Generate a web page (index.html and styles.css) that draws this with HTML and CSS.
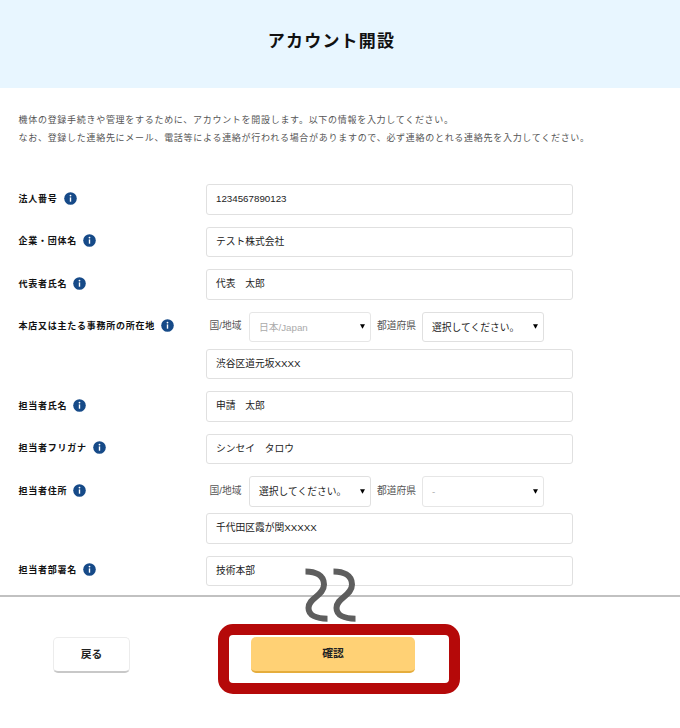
FILE: index.html
```html
<!DOCTYPE html>
<html lang="ja">
<head>
<meta charset="utf-8">
<title>アカウント開設</title>
<link rel="stylesheet" href="styles.css">
</head>
<body>
<svg class="defs" width="0" height="0">
  <symbol id="info" viewBox="0 0 13 13">
    <circle cx="6.5" cy="6.5" r="6.3" fill="#164a88"/>
    <circle cx="6.5" cy="3.6" r="0.9" fill="#fff"/>
    <path d="M6.5 5.4V9.7" stroke="#fff" stroke-width="1.4"/>
  </symbol>
  <symbol id="caret" viewBox="0 0 5 5">
    <path d="M0 0.2H5L2.5 4.8Z" fill="#000"/>
  </symbol>
</svg>
<header class="header"><h1 class="title">アカウント開設</h1></header>
<main>
  <div class="intro">
    <p>機体の登録手続きや管理をするために、アカウントを開設します。以下の情報を入力してください。</p>
    <p>なお、登録した連絡先にメール、電話等による連絡が行われる場合がありますので、必ず連絡のとれる連絡先を入力してください。</p>
  </div>
  <div class="form">
    <div class="row">
      <div class="label">法人番号<svg class="info"><use href="#info"/></svg></div>
      <div class="fields"><div class="input">1234567890123</div></div>
    </div>
    <div class="row">
      <div class="label">企業・団体名<svg class="info"><use href="#info"/></svg></div>
      <div class="fields"><div class="input">テスト株式会社</div></div>
    </div>
    <div class="row">
      <div class="label">代表者氏名<svg class="info"><use href="#info"/></svg></div>
      <div class="fields"><div class="input">代表　太郎</div></div>
    </div>
    <div class="row">
      <div class="label">本店又は主たる事務所の所在地<svg class="info"><use href="#info"/></svg></div>
      <div class="fields">
        <div class="selects">
          <span class="caption">国/地域</span>
          <div class="select disabled">日本/Japan<svg class="caret"><use href="#caret"/></svg></div>
          <span class="caption pref">都道府県</span>
          <div class="select">選択してください。<svg class="caret"><use href="#caret"/></svg></div>
        </div>
        <div class="input">渋谷区道元坂XXXX</div>
      </div>
    </div>
    <div class="row">
      <div class="label">担当者氏名<svg class="info"><use href="#info"/></svg></div>
      <div class="fields"><div class="input">申請　太郎</div></div>
    </div>
    <div class="row">
      <div class="label">担当者フリガナ<svg class="info"><use href="#info"/></svg></div>
      <div class="fields"><div class="input">シンセイ　タロウ</div></div>
    </div>
    <div class="row">
      <div class="label">担当者住所<svg class="info"><use href="#info"/></svg></div>
      <div class="fields">
        <div class="selects">
          <span class="caption">国/地域</span>
          <div class="select">選択してください。<svg class="caret"><use href="#caret"/></svg></div>
          <span class="caption pref">都道府県</span>
          <div class="select disabled">-<svg class="caret"><use href="#caret"/></svg></div>
        </div>
        <div class="input">千代田区霞が関XXXXX</div>
      </div>
    </div>
    <div class="row">
      <div class="label">担当者部署名<svg class="info"><use href="#info"/></svg></div>
      <div class="fields"><div class="input">技術本部</div></div>
    </div>
  </div>
</main>
<footer class="footer">
  <svg class="break" viewBox="0 0 52 54" fill="none" stroke="#5e5e5e" stroke-width="6">
    <path id="wave" d="M.5 3.5C10 3.5 19 7 19 16.5C19 28 3.5 29.5 3.5 40C3.5 47 11 50.7 22.5 50.7"/>
    <use href="#wave" x="28"/>
  </svg>
  <div class="button back">戻る</div>
  <div class="highlight"><div class="button confirm">確認</div></div>
</footer>
</body>
</html>
```
FILE: styles.css
```css
* { box-sizing: border-box; }

body {
  margin: 0;
  background: #fff;
  color: #222;
  font-family: "Liberation Sans", "Noto Sans CJK JP", sans-serif;
  font-size: 9.75px;
}

.defs { display: block; }

.header {
  height: 87.5px;
  background: #e8f6ff;
  display: flex;
  justify-content: center;
  padding: 27px 17px 0 0;
}

.title {
  margin: 0;
  font-size: 17px;
  line-height: 30px;
  letter-spacing: 1.2px;
  font-weight: 700;
  color: #111;
}

.intro {
  padding: 23px 0 0 18.5px;
  height: 96.5px;
  color: #555;
  font-size: 9px;
  letter-spacing: 0.71px;
  white-space: nowrap;
}

.intro p { margin: 0; line-height: 18px; }

.form {
  padding-left: 18.5px;
  height: 411px;
  display: flex;
  flex-direction: column;
  gap: 12px;
}

.row { display: flex; }

.label {
  width: 187.5px;
  height: 28px;
  display: flex;
  align-items: center;
  color: #111;
  font-size: 9px;
  letter-spacing: 0.75px;
  font-weight: 700;
}

.info { width: 13px; height: 13px; margin-left: 6px; }

.fields {
  width: 367px;
  display: flex;
  flex-direction: column;
  gap: 6.5px;
}

.input, .select {
  height: 30.5px;
  border: 1px solid #e0e0e0;
  border-radius: 3px;
  padding: 0 0 2px 9px;
  display: flex;
  align-items: center;
  white-space: nowrap;
}

.selects { display: flex; align-items: center; }

.caption {
  width: 43px;
  padding: 0 0 3px 3.5px;
  color: #555;
  white-space: nowrap;
}

.caption.pref { width: 51px; padding-left: 6px; }

.select {
  width: 122px;
  justify-content: space-between;
  padding: 0 5px 0 9px;
}

.disabled { color: #aaa; border-color: #e6e6e6; }

.caret { width: 5px; height: 5px; }

.footer {
  position: relative;
  border-top: 2px solid #c1c1c1;
  height: 133px;
  display: flex;
  align-items: flex-start;
}

.break {
  position: absolute;
  left: 305px;
  top: -29px;
  width: 52px;
  height: 54px;
}

.button {
  display: flex;
  align-items: center;
  justify-content: center;
  height: 36px;
  padding-bottom: 3px;
  border-radius: 5px;
  font-size: 10.75px;
  font-weight: 700;
}

.back {
  width: 77px;
  margin: 40px 88px 0 53px;
  border: 1px solid #ececec;
  border-bottom: 2px solid #c8c8c8;
}

.highlight {
  width: 242px;
  height: 70px;
  margin-top: 27px;
  padding: 2px 0 0 22px;
  border: 11px solid #b50909;
  border-radius: 15px;
}

.confirm {
  width: 164px;
  background: #ffd175;
  border-bottom: 2px solid #e5ad3d;
}
```
